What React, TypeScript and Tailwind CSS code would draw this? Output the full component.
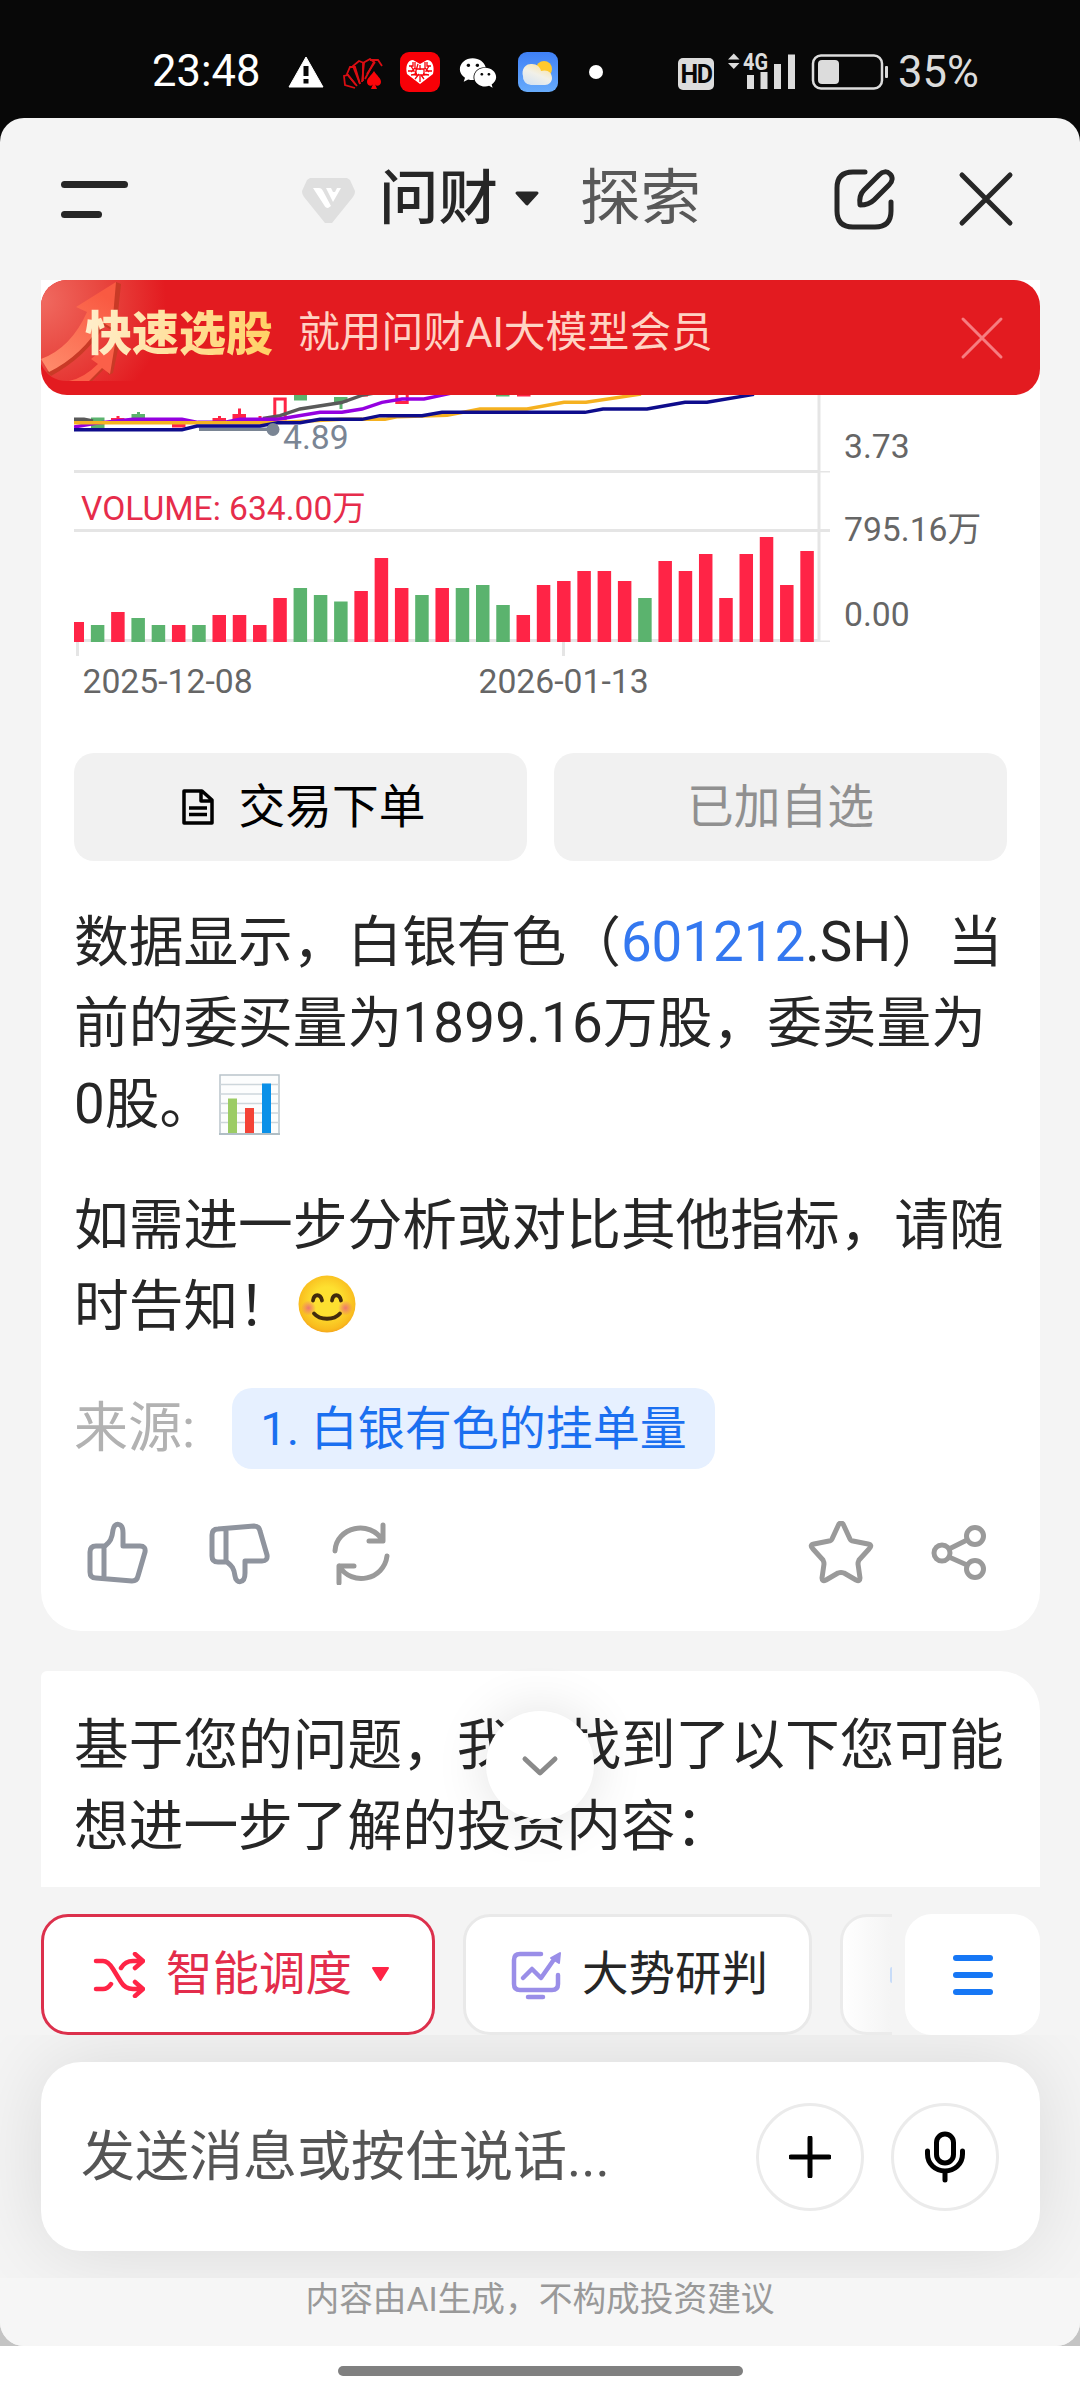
import { FaWeixin } from "react-icons/fa";

type Bar = { h: number; up: boolean };

const UP = "#ff2446";
const DOWN = "#5bb36e";

// volume bars, left to right: negative value = falling day
const volumes: Bar[] = [
  20, -17, 30, -24, -17, 17, -17, 27, 27, 17, 44, -54, -47, -40.5, 51, 84, 54, -47, 54, -54,
  -57, -37, 27, 57, 61, 71, 71, 61, -44, 81, 71, 88, 44, 88, 105, 57, 91,
].map((v) => ({ h: Math.abs(v), up: v > 0 }));

const answerText = "text-[54.7px] leading-[81px] text-[#262626] whitespace-nowrap";

function StatusBar() {
  return (
    <div className="h-[118px] bg-[#080808] flex items-start pt-[52px] pl-[152px] text-white">
      <span className="w-[108px] text-[43.500px] leading-[40px] whitespace-nowrap">23:48</span>
      <svg className="ml-[27px] mt-1" width="38" height="32" viewBox="0 0 38 32">
        <path d="M19 1 36 31H2Z" fill="#fff" stroke="#fff" strokeWidth="1" strokeLinejoin="round" />
        <path d="M16.500 10h5v10h-5zM16.500 23h5v4.500h-5z" fill="#080808" />
      </svg>
      <svg className="ml-[18px] mt-1.5" width="42" height="32" viewBox="0 0 42 32">
        <g fill="none" stroke="#d90d12" strokeWidth="1.800">
          <path d="M12 30 2 27 1 18l4-1 9 11" />
          <path d="m13 27-9-11 3-7 5 0 5 17" />
          <path d="M17 26 10 8l6-5 5 2-2 19" />
          <path d="m20 23 0-18 7-4 4 3-9 17" />
          <path d="M27 2 35 2l4 6M24 16l8-12" />
        </g>
        <path d="M31 13c3 5 7 7 7 11 0 4-5 5-6 2l2 5h-6l2-5c-1 3-6 2-6-2 0-4 4-6 7-11z" fill="#fb0509" />
      </svg>
      <svg className="ml-[15px]" width="40" height="40" viewBox="0 0 40 40">
        <rect width="40" height="40" rx="9" fill="#f80007" />
        <path d="M20 32 7 22c-2-8 1-14 6-14l7 4 7-4c5 0 8 6 6 14z" fill="#fff" />
        <path
          d="M9 14h4v-4M8 19h6l-3-5M15 10v6l-4 4M18 12l-3 10M11 23l6-1M15 27l4-5M20 13v5M20 24v6M16 17h8v6h-8zM24 27l-3-4M31 14h-4v-4M32 19h-6l3-5M25 10v6l4 4M29 23l-6-1"
          stroke="#f80007"
          strokeWidth="1.300"
          fill="none"
        />
      </svg>
      <FaWeixin className="ml-[19px] mt-0.5 text-white" size={38} />
      <svg className="ml-[21px]" width="40" height="40" viewBox="0 0 40 40">
        <defs>
          <linearGradient id="sky" x1="0" y1="0" x2="0" y2="1">
            <stop offset="0" stopColor="#3f80f6" />
            <stop offset="1" stopColor="#67abfb" />
          </linearGradient>
          <linearGradient id="cloud" x1="0.800" y1="0" x2="0.200" y2="1">
            <stop offset="0" stopColor="#fbe3a0" />
            <stop offset="0.500" stopColor="#f1f0e8" />
            <stop offset="1" stopColor="#d5e3f2" />
          </linearGradient>
        </defs>
        <rect width="40" height="40" rx="9" fill="url(#sky)" />
        <circle cx="26" cy="17" r="8" fill="#ffc92c" />
        <path d="M13 33a8 8 0 0 1-8-9 8.500 9 0 0 1 9-12c5 0 8 3 9 7 6-2 11 1 11 7 0 4-3 7-7 7z" fill="url(#cloud)" />
      </svg>
      <span className="ml-[31px] mt-[13px] w-3.5 h-3.5 rounded-full bg-white" />
      <span className="ml-[75px] mt-1.5 w-9 h-8 rounded-[5px] bg-[#dcdcdc] text-[#080808] text-[25px] leading-[33px] font-bold text-center tracking-[-1.5px]">
        HD
      </span>
      <svg className="ml-[13px] -mt-2.5" width="70" height="48" viewBox="727 42 70 48">
        <path d="M728 59.500h11.500l-5.700-6zM728 63h11.500l-5.700 6z" fill="#dcdcdc" />
        <path d="M747 75h7v14h-7zM760.500 72h7v17h-7zM774 64h7v25h-7zM788 54.500h7V89h-7z" fill="#dcdcdc" />
        <text x="743" y="69.500" textLength="25" lengthAdjust="spacingAndGlyphs" fontSize="23" fontWeight="700" fill="#dcdcdc">
          4G
        </text>
      </svg>
      <svg className="ml-[14px] mt-[1px]" width="78" height="38" viewBox="0 0 78 38">
        <rect x="2" y="2.500" width="69" height="33" rx="8" fill="none" stroke="#dcdcdc" strokeWidth="2.500" />
        <rect x="7" y="7" width="21" height="24" rx="4" fill="#dcdcdc" />
        <rect x="74" y="13" width="3" height="12" rx="1" fill="#dcdcdc" />
      </svg>
      <span className="ml-[9px] mt-px text-[43.500px] leading-[40px] text-[#dcdcdc] whitespace-nowrap">35%</span>
    </div>
  );
}

function Header() {
  return (
    <header className="h-[162px] flex items-center pl-[61px] pr-[66px]">
      <div className="flex flex-col gap-[23px]">
        <span className="w-[67px] h-[7px] rounded-full bg-[#262626]" />
        <span className="w-[41px] h-[7px] rounded-full bg-[#262626]" />
      </div>
      <svg className="ml-[174px] mt-1" width="53" height="46" viewBox="0 0 53 46">
        <path d="M8 0h37l3 2 5 11c0 3-1 4-2 6L30 45h-7L2 19c-1-2-2-3-2-6L5 2z" fill="#dfdfdf" />
        <path d="M11 10h6c2 0 3 1 4 3l8 15-3 2c-2 0-3-1-4-3zM24 10h5l2 4 2 0 2-4h4l-8 14z" fill="#fff" />
      </svg>
      <span className="ml-[24px] text-[59.500px] leading-[80px] font-medium text-[#262626]">问财</span>
      <svg className="ml-[16px]" width="26" height="16" viewBox="0 0 26 16">
        <path d="M3 2h20L13 13z" fill="#262626" stroke="#262626" strokeWidth="3" strokeLinejoin="round" />
      </svg>
      <span className="ml-[40px] text-[60.500px] leading-[80px] text-[#585858]">探索</span>
      <svg className="ml-auto" width="63" height="62" viewBox="0 0 63 62">
        <g fill="none" stroke="#262626" strokeWidth="5" strokeLinecap="round" strokeLinejoin="round">
          <path d="M32 4H20Q4 4 4 20v23q0 16 16 16h22q16 0 16-16V34" />
          <path d="M27 37c-1-7 0-11 4-15L46 7c4-4 8-4 11-1s3 7-1 11L41 32c-4 4-8 5-14 5z" />
        </g>
      </svg>
      <svg className="ml-[62px]" width="56" height="56" viewBox="0 0 56 56">
        <path d="M4 4 52 52M52 4 4 52" stroke="#262626" strokeWidth="5" strokeLinecap="round" />
      </svg>
    </header>
  );
}

function Banner() {
  return (
    <div className="bg-white">
      <div className="relative h-[115px] rounded-[26px] bg-[#e31b20] overflow-hidden flex items-center pl-[44px] pr-[36px]">
        <svg className="absolute left-0 top-0" width="190" height="101" viewBox="0 0 190 101">
          <defs>
            <radialGradient id="glow" gradientUnits="userSpaceOnUse" cx="0" cy="20" r="125">
              <stop offset="0" stopColor="#f06a60" />
              <stop offset="0.500" stopColor="#e8463f" />
              <stop offset="1" stopColor="#e31b20" />
            </radialGradient>
            <linearGradient id="arrow" x1="0" y1="1" x2="0.600" y2="0">
              <stop offset="0" stopColor="#ff8d6d" />
              <stop offset="1" stopColor="#f95a42" />
            </linearGradient>
          </defs>
          <path d="M0 0h190v101H26Q8 101 0 84z" fill="url(#glow)" />
          <path d="M75 2l5 2-5 48-12-6Q46 76 10 96l-4-4z" fill="#c93a26" />
          <path d="M75 2l-4 46-10-6Q42 75 8 92L0 79Q30 68 46 32l-11-5z" fill="url(#arrow)" />
          <path d="M79 60l-7 33-4 2-4-7-13 13h-8z" fill="#c93a26" />
          <path d="M75 58l-6 36-8-6-13 13H28q15-3 29-17l-7-5z" fill="#fb6049" />
        </svg>
        <span className="relative bg-gradient-to-r from-[#ffeecb] to-[#ffd062] bg-clip-text text-transparent text-[47px] leading-[60px] font-black -mt-2 whitespace-nowrap">
          快速选股
        </span>
        <span className="relative ml-[25px] text-[41.800px] leading-[60px] text-[#ffd3c4] -mt-2.5 whitespace-nowrap">
          就用问财AI大模型会员
        </span>
        <svg className="ml-auto" width="44" height="44" viewBox="0 0 44 44">
          <path d="M3 3 41 41M41 3 3 41" stroke="#f67d80" strokeWidth="3" strokeLinecap="round" />
        </svg>
      </div>
    </div>
  );
}

function StockChart() {
  return (
    <svg className="block" width="932" height="358" viewBox="74 395 932 358">
      {/* grid and axes */}
      <g fill="#e5e5e5">
        <path d="M74 470h745v3H74zM74 529h756v3H74zM74 639h745v3H74zM817.500 395h3v247h-3z" />
        <path d="M820 471h10v1.500h-10zM820 640.500h10v1.500h-10zM76 642h3v14h-3zM562 642h3v14h-3z" />
      </g>

      {/* candles */}
      <g fill={DOWN}>
        <path d="M91 417.500h13.500V428H91zM131.500 414H145v4h-13.500zM137 412h3v4h-3zM294 395h13v5.500h-13z" />
        <path d="M334 397h13.500v5.500H334zM339.500 402h3v7h-3zM496 395h13.500v1.500H496z" />
      </g>
      <g fill={UP}>
        <path d="M111 418h13.500v4H111zM116.500 416h3v4h-3zM172 423h13.500v4.500H172zM212.500 418H226v4h-13.500zM218 416h3v4h-3z" />
        <path d="M232.500 414H246v5h-13.500zM238 408.500h3v8h-3zM253 418h13.500v3H253zM258.500 416h3v4h-3zM362 395h6v1.500h-6zM517 395h13.500v1.500H517z" />
      </g>
      <path d="M274.800 399h10.400v20h-10.400zM396.800 390h10.400v12.500h-10.400z" fill="none" stroke={UP} strokeWidth="3" />

      {/* moving averages */}
      <g fill="none" strokeWidth="3.400">
        <path d="M199 429.300h72" stroke="#7a8594" />
        <path d="M74 419.300h10l9 1.700M263 418.500l17-2.800 20-6.700 41.500-6.500L363 395l12-2" stroke="#595959" />
        <path
          d="M74 427l20-3.500 39-4.200h49l16 3h26l16-3h38l42-7h22l20-3.300 20-6.700 20-3.300h22l28-6"
          stroke="#9400e0"
        />
        <path d="M74 422.700h200l68-3.400h43l13-2.600 49-1.400 33-6.300h47l37-6.700h22l55-8.300" stroke="#f5b120" />
        <path
          d="M74 429.700h108l15-3.700h63l18-3.300h22l20-3.400h42l18-3.600h42l20-3.400h143l18-3.300h44l38-6.700h22l47-8"
          stroke="#0e0c8c"
        />
      </g>
      <circle cx="273" cy="429.500" r="6.500" fill="#7a8594" />

      {/* volume */}
      {volumes.map((bar, i) => {
        const x = i === 0 ? 74 : 70.6 + i * 20.27;
        return (
          <rect key={i} x={x} y={642 - bar.h} width={i === 0 ? 10 : 13.5} height={bar.h} fill={bar.up ? UP : DOWN} />
        );
      })}

      <g fontSize="33.700" fill="#666">
        <text x="283" y="449" fill="#7a8594">4.89</text>
        <text x="81" y="520" fill="#e62c4b" fontSize="33.600">VOLUME: 634.00万</text>
        <text x="82.500" y="692.500">2025-12-08</text>
        <text x="478.500" y="692.500">2026-01-13</text>
        <text x="844" y="457.500">3.73</text>
        <text x="844" y="540.500">795.16万</text>
        <text x="844" y="626">0.00</text>
      </g>
    </svg>
  );
}

function ChartEmoji() {
  return (
    <svg className="inline-block align-baseline ml-[5px] -mb-[12px]" width="61" height="61" viewBox="0 0 61 61">
      <rect x="1" y="1" width="59" height="59" fill="#fcfdfd" stroke="#b9c4ca" strokeWidth="1.500" />
      <path d="M1 10.500h59M1 20h59M1 29.500h59M1 39h59M1 48.500h59" stroke="#cdd6db" strokeWidth="1.500" />
      <path d="M9 24.500h9V59H9z" fill="#9ccc65" />
      <path d="M26 34h9v25h-9z" fill="#f44336" />
      <path d="M43 9.500h9V59h-9z" fill="#0a90e8" />
      <path d="M0 59h61v2H0z" fill="#b0bec5" />
    </svg>
  );
}

function SmileEmoji() {
  return (
    <svg className="inline-block align-baseline ml-[5px] -mb-[8px]" width="58" height="58" viewBox="0 0 58 58">
      <defs>
        <radialGradient id="face" cx="0.500" cy="0.450" r="0.550">
          <stop offset="0.450" stopColor="#fde030" />
          <stop offset="0.900" stopColor="#f9bc1e" />
          <stop offset="1" stopColor="#f5a81c" />
        </radialGradient>
        <radialGradient id="blush">
          <stop offset="0" stopColor="#ed7770" />
          <stop offset="1" stopColor="#ed7770" stopOpacity="0" />
        </radialGradient>
      </defs>
      <circle cx="29" cy="29" r="28.500" fill="url(#face)" />
      <circle cx="10.500" cy="33" r="7.500" fill="url(#blush)" />
      <circle cx="47.500" cy="33" r="7.500" fill="url(#blush)" />
      <g fill="none" stroke="#422b0d" strokeWidth="3.800" strokeLinecap="round">
        <path d="M15 25.500c1-7 7.500-7 9 0M34 25.500c1-7 7.500-7 9 0" />
        <path d="M16 38.500c6 7 20 7 26 0" />
      </g>
    </svg>
  );
}

function AnswerActions() {
  return (
    <div className="mt-[49px] flex items-center pl-3 pr-[20px] h-[70px]">
      <svg width="64" height="64" viewBox="0 0 64 64" fill="none" stroke="#8f949e" strokeWidth="5" strokeLinejoin="round">
        <path d="M19 25h-9q-6 0-6 6v20q0 6 6 6l36 3q5 0 6-5l7-24q1-6-5-6H37V12c0-11-9-11-10-3-1 9-3 12-8 16zM18 25v33" />
      </svg>
      <svg className="ml-[58px]" width="64" height="64" viewBox="0 0 64 64" fill="none" stroke="#8f949e" strokeWidth="5" strokeLinejoin="round">
        <path d="M19 41h-9q-6 0-6-6V14q0-6 6-6l36-3q5 0 6 5l7 24q1 6-5 6H37v12c0 11-9 11-10 3-1-8-3-10-8-14zM18 7v34" />
      </svg>
      <svg className="ml-[58px]" width="62" height="64" viewBox="0 0 62 64" fill="none" stroke="#9a9a9a" strokeWidth="5" strokeLinecap="round" strokeLinejoin="round">
        <path d="M5 30C6 6 40-2 53 20V4M53 20H39" />
        <path d="M57 35C54 59 22 66 9 45v17M9 45h15" />
      </svg>
      <svg className="ml-auto" width="66" height="64" viewBox="0 0 66 64" fill="none" stroke="#9a9a9a" strokeWidth="5" strokeLinejoin="round">
        <path d="M33 2q2 0 3 3l6 13q1 2 3 2l15 3q5 1 1 5L51 39q-1 2-1 4l2 14q0 4-4 2l-12-7q-3-1-6 0l-12 7q-4 2-4-2l2-14q0-2-1-4L5 28q-4-4 1-5l15-3q2 0 3-2l6-13q1-3 3-3z" />
      </svg>
      <svg className="ml-[57px]" width="56" height="58" viewBox="0 0 56 58" fill="none" stroke="#9a9a9a" strokeWidth="5">
        <circle cx="11" cy="29" r="8" />
        <circle cx="44" cy="12" r="8.500" />
        <circle cx="44" cy="45" r="8.500" />
        <path d="m18 25 18-9M18 33l18 8" />
      </svg>
    </div>
  );
}

function AnswerCard() {
  return (
    <section className="h-[1236px] bg-white rounded-b-[40px] px-[33px]">
      <StockChart />
      <div className="grid grid-cols-2 gap-[27px]">
        <button className="h-[108px] rounded-[20px] bg-[#f1f1f1] flex items-center justify-center pl-[5px] text-[46.700px] text-black">
          <svg className="mr-[24px]" width="34" height="36" viewBox="0 0 34 36" fill="none" stroke="#000" strokeWidth="3.500">
            <path d="M3 2h18l10 9v23H3zM20 2v10h11" strokeLinejoin="round" />
            <path d="M8 19h18M8 25.500h18" />
          </svg>
          <span className="mt-px">交易下单</span>
        </button>
        <button className="h-[108px] rounded-[20px] bg-[#f1f1f1] text-[46.700px] text-[#909090]">已加自选</button>
      </div>

      <p className={`mt-[41px] h-[242px] ${answerText}`}>
        数据显示，白银有色（<span className="text-[#3478f0]">601212</span>.SH）<span className="ml-[2px]">当</span>
        <br />
        前的委买量为<span className="tracking-[0.3px]">1899.16</span>万股，委卖量为
        <br />
        0股。
        <ChartEmoji />
      </p>
      <p className={`mt-[41px] h-[162px] ${answerText}`}>
        如需进一步分析或对比其他指标，请随
        <br />
        时告知！
        <SmileEmoji />
      </p>

      <div className="mt-[41px] flex items-center">
        <span className="w-[158px] text-[54px] leading-[81px] text-[#b2b2b2] whitespace-nowrap">来源:</span>
        <span className="w-[483px] h-[81px] rounded-[20px] bg-[#e6f0ff] text-center text-[47px] leading-[81px] text-[#1a6ff0] whitespace-nowrap">
          1. 白银有色的挂单量
        </span>
      </div>
      <AnswerActions />
    </section>
  );
}

function FollowUpCard() {
  return (
    <section className="relative mt-[40px] h-[216px] bg-white rounded-tl-[6px] rounded-tr-[40px] px-[33px] pt-[34px]">
      <p className={answerText}>
        基于您的问题，我们找到了以下您可能
        <br />
        想进一步了解的投资内容：
      </p>
      <button className="absolute left-[445px] top-[40px] w-[108px] h-[108px] rounded-full bg-white shadow-[0_0_54px_rgba(0,0,0,0.12)] flex items-center justify-center">
        <svg className="mt-1" width="40" height="24" viewBox="0 0 40 24">
          <path d="M5 4l15 14L35 4" fill="none" stroke="#8a8a8a" strokeWidth="5" strokeLinecap="round" strokeLinejoin="round" />
        </svg>
      </button>
    </section>
  );
}

function QuickActions() {
  return (
    <div className="mt-[27px] h-[121px] flex">
      <button className="w-[394px] shrink-0 rounded-[27px] border-[3px] border-[#dc304c] bg-white flex items-center pl-[49px] text-[46.500px] text-[#e32c4b]">
        <svg width="52" height="46" viewBox="0 0 52 46" fill="none" stroke="#ff2446" strokeWidth="4.500" strokeLinecap="round" strokeLinejoin="round">
          <path d="M3 9h7c4 0 7 3 10 8l8 13c3 5 7 7 12 7h9M42 30l8 7-8 7" />
          <path d="M3 37h7c4 0 6-2 8-5M28 16c3-5 7-7 12-7h9M42 2l8 7-8 7" />
        </svg>
        <span className="ml-[21px]">智能调度</span>
        <svg className="ml-[19px]" width="19" height="15" viewBox="0 0 19 15">
          <path d="M2 1h15L9.500 13z" fill="#ff2446" stroke="#ff2446" strokeWidth="2" strokeLinejoin="round" />
        </svg>
      </button>
      <button className="ml-[28px] w-[349px] shrink-0 rounded-[27px] border-[3px] border-[#e9e9e9] bg-white flex items-center pl-[45px] text-[46.500px] text-[#262626]">
        <svg width="51" height="50" viewBox="0 0 51 50" fill="none" stroke="#9a8ee8" strokeWidth="4.500" strokeLinecap="round" strokeLinejoin="round">
          <path d="M30 4H9Q3 4 3 10v24q0 6 6 6h32q6 0 6-6V25" />
          <path d="M12 28l9-9 9 9 14-20M17 47h15" />
          <path d="M40 8l9-5-1 10z" fill="#9a8ee8" strokeWidth="2" />
        </svg>
        <span className="ml-[20px]">大势研判</span>
      </button>
      <div className="ml-[28px] w-[52px] shrink-0 rounded-l-[27px] border-[3px] border-r-0 border-[#ebebeb] bg-gradient-to-r from-white to-[#f4f4f4] flex items-center justify-end">
        <span className="w-[2px] h-[16px] rounded-l-full bg-[#c8dcf8]" />
      </div>
      <button className="ml-auto w-[135px] rounded-[27px] bg-white flex flex-col items-center justify-center gap-[11px]">
        <span className="w-10 h-[6px] rounded-full bg-[#1677f5]" />
        <span className="w-10 h-[6px] rounded-full bg-[#1677f5]" />
        <span className="w-10 h-[6px] rounded-full bg-[#1677f5]" />
      </button>
    </div>
  );
}

function Composer() {
  return (
    <div className="h-[243px] pl-[41px] py-[27px] pr-[40px] overflow-hidden">
      <div className="h-[189px] rounded-[40px] bg-white shadow-[0_0_80px_rgba(0,0,0,0.11)] flex items-center pl-[40px] pr-[41px]">
        <span className="mt-0.5 text-[54px] leading-[81px] text-[#555] whitespace-nowrap">发送消息或按住说话...</span>
        <button className="ml-auto w-[108px] h-[108px] rounded-full border-[3px] border-[#ebebeb] flex items-center justify-center">
          <svg width="42" height="42" viewBox="0 0 42 42">
            <path d="M21 2v38M2 21h38" stroke="#000" strokeWidth="5" strokeLinecap="round" />
          </svg>
        </button>
        <button className="ml-[27px] w-[108px] h-[108px] rounded-full border-[3px] border-[#ebebeb] flex items-center justify-center">
          <svg width="42" height="52" viewBox="0 0 42 52" fill="none" stroke="#000" strokeWidth="5" strokeLinecap="round">
            <rect x="12.500" y="3" width="17" height="29" rx="8.500" />
            <path d="M3.500 20v3c0 10 8 17 17.500 17s17.500-7 17.500-17v-3M21 40v9" />
          </svg>
        </button>
      </div>
    </div>
  );
}

export default function App() {
  return (
    <div className="w-[1080px] h-[2400px] overflow-hidden bg-[#080808] font-[Roboto,'Noto_Sans_CJK_SC',sans-serif]" lang="zh-CN">
      <StatusBar />
      <div className="h-[2282px] bg-white rounded-t-[24px]">
        <div className="bg-[linear-gradient(to_bottom,#080808_50%,#c4c4c4_50%)]">
          <main className="h-[2228px] rounded-[24px] bg-[#f4f4f4] overflow-hidden">
            <Header />
            <div className="pl-[41px] pr-[40px]">
              <Banner />
              <AnswerCard />
              <FollowUpCard />
              <QuickActions />
            </div>
            <Composer />
            <p className="h-[68px] bg-[#f6f6f6] text-center text-[33.700px] leading-[43px] text-[#999]">
              内容由AI生成，不构成投资建议
            </p>
          </main>
        </div>
        <div className="h-[54px] flex justify-center pt-[20px]">
          <span className="w-[405px] h-[10px] rounded-full bg-[#808080]" />
        </div>
      </div>
    </div>
  );
}
